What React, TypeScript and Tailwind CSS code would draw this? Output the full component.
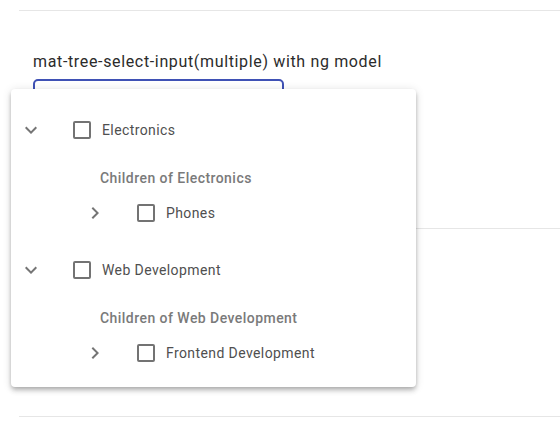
type TreeNode = {
  name: string
  children: string[]
}

const nodes: TreeNode[] = [
  { name: 'Electronics', children: ['Phones'] },
  { name: 'Web Development', children: ['Frontend Development'] },
]

function ExpandMore() {
  return (
    <svg width="24" height="24" viewBox="0 0 24 24" className="fill-[#757575]">
      <path d="M16.59 8.59L12 13.17 7.41 8.59 6 10l6 6 6-6z" />
    </svg>
  )
}

function ChevronRight() {
  return (
    <svg width="24" height="24" viewBox="0 0 24 24" className="fill-[#757575]">
      <path d="M10 6L8.59 7.41 13.17 12l-4.58 4.59L10 18l6-6z" />
    </svg>
  )
}

function Checkbox() {
  return <span className="block w-[18px] h-[18px] border-2 border-[#737373] rounded-[2px]" />
}

function TreeRow({ label, expanded, className }: { label: string; expanded: boolean; className: string }) {
  return (
    <div className={`flex items-center ${className}`}>
      <span className="ml-[8px] w-6 h-6 flex items-center justify-center">
        {expanded ? <ExpandMore /> : <ChevronRight />}
      </span>
      <span className="ml-[30px]">
        <Checkbox />
      </span>
      <span className="ml-[11px] text-sm tracking-[0.4px] text-[#4f4f4f]">{label}</span>
    </div>
  )
}

export default function App() {
  return (
    <div className="relative w-[560px] h-[433px] bg-white overflow-hidden font-['Roboto',sans-serif]">
      <div className="pl-[19px]">
        <div className="mt-[10px] h-px bg-[#e6e6e6]" />

        <div className="pl-[14px] mt-[39px]">
          <div className="text-base leading-6 tracking-[0.65px] text-[#2b2b2b]">
            mat-tree-select-input(multiple) with ng model
          </div>
          <div className="mt-[5px] w-[251px] h-[56px] border-2 border-[#3f51b5] rounded-[5px]" />
        </div>

        <div className="mt-[93px] h-px bg-[#e6e6e6]" />
        <div className="mt-[187px] h-px bg-[#e6e6e6]" />
      </div>

      {/* dropdown overlay */}
      <div className="absolute left-[11px] top-[89px] w-[405px] h-[298px] bg-white rounded-[4px] shadow-[0_2px_4px_-1px_rgba(0,0,0,0.2),0_4px_5px_0_rgba(0,0,0,0.14),0_1px_10px_0_rgba(0,0,0,0.12)] pt-[17px]">
        {nodes.map((node, i) => (
          <div key={node.name} className={i > 0 ? 'mt-[10px]' : ''}>
            <TreeRow label={node.name} expanded className="h-12" />
            <div className="mt-3 h-6 flex items-center pl-[89px] text-sm tracking-[0.45px] font-medium text-[#7a7a7a]">
              Children of {node.name}
            </div>
            {node.children.map((child) => (
              <TreeRow key={child} label={child} expanded={false} className="h-[46px] pl-16" />
            ))}
          </div>
        ))}
      </div>
    </div>
  )
}
